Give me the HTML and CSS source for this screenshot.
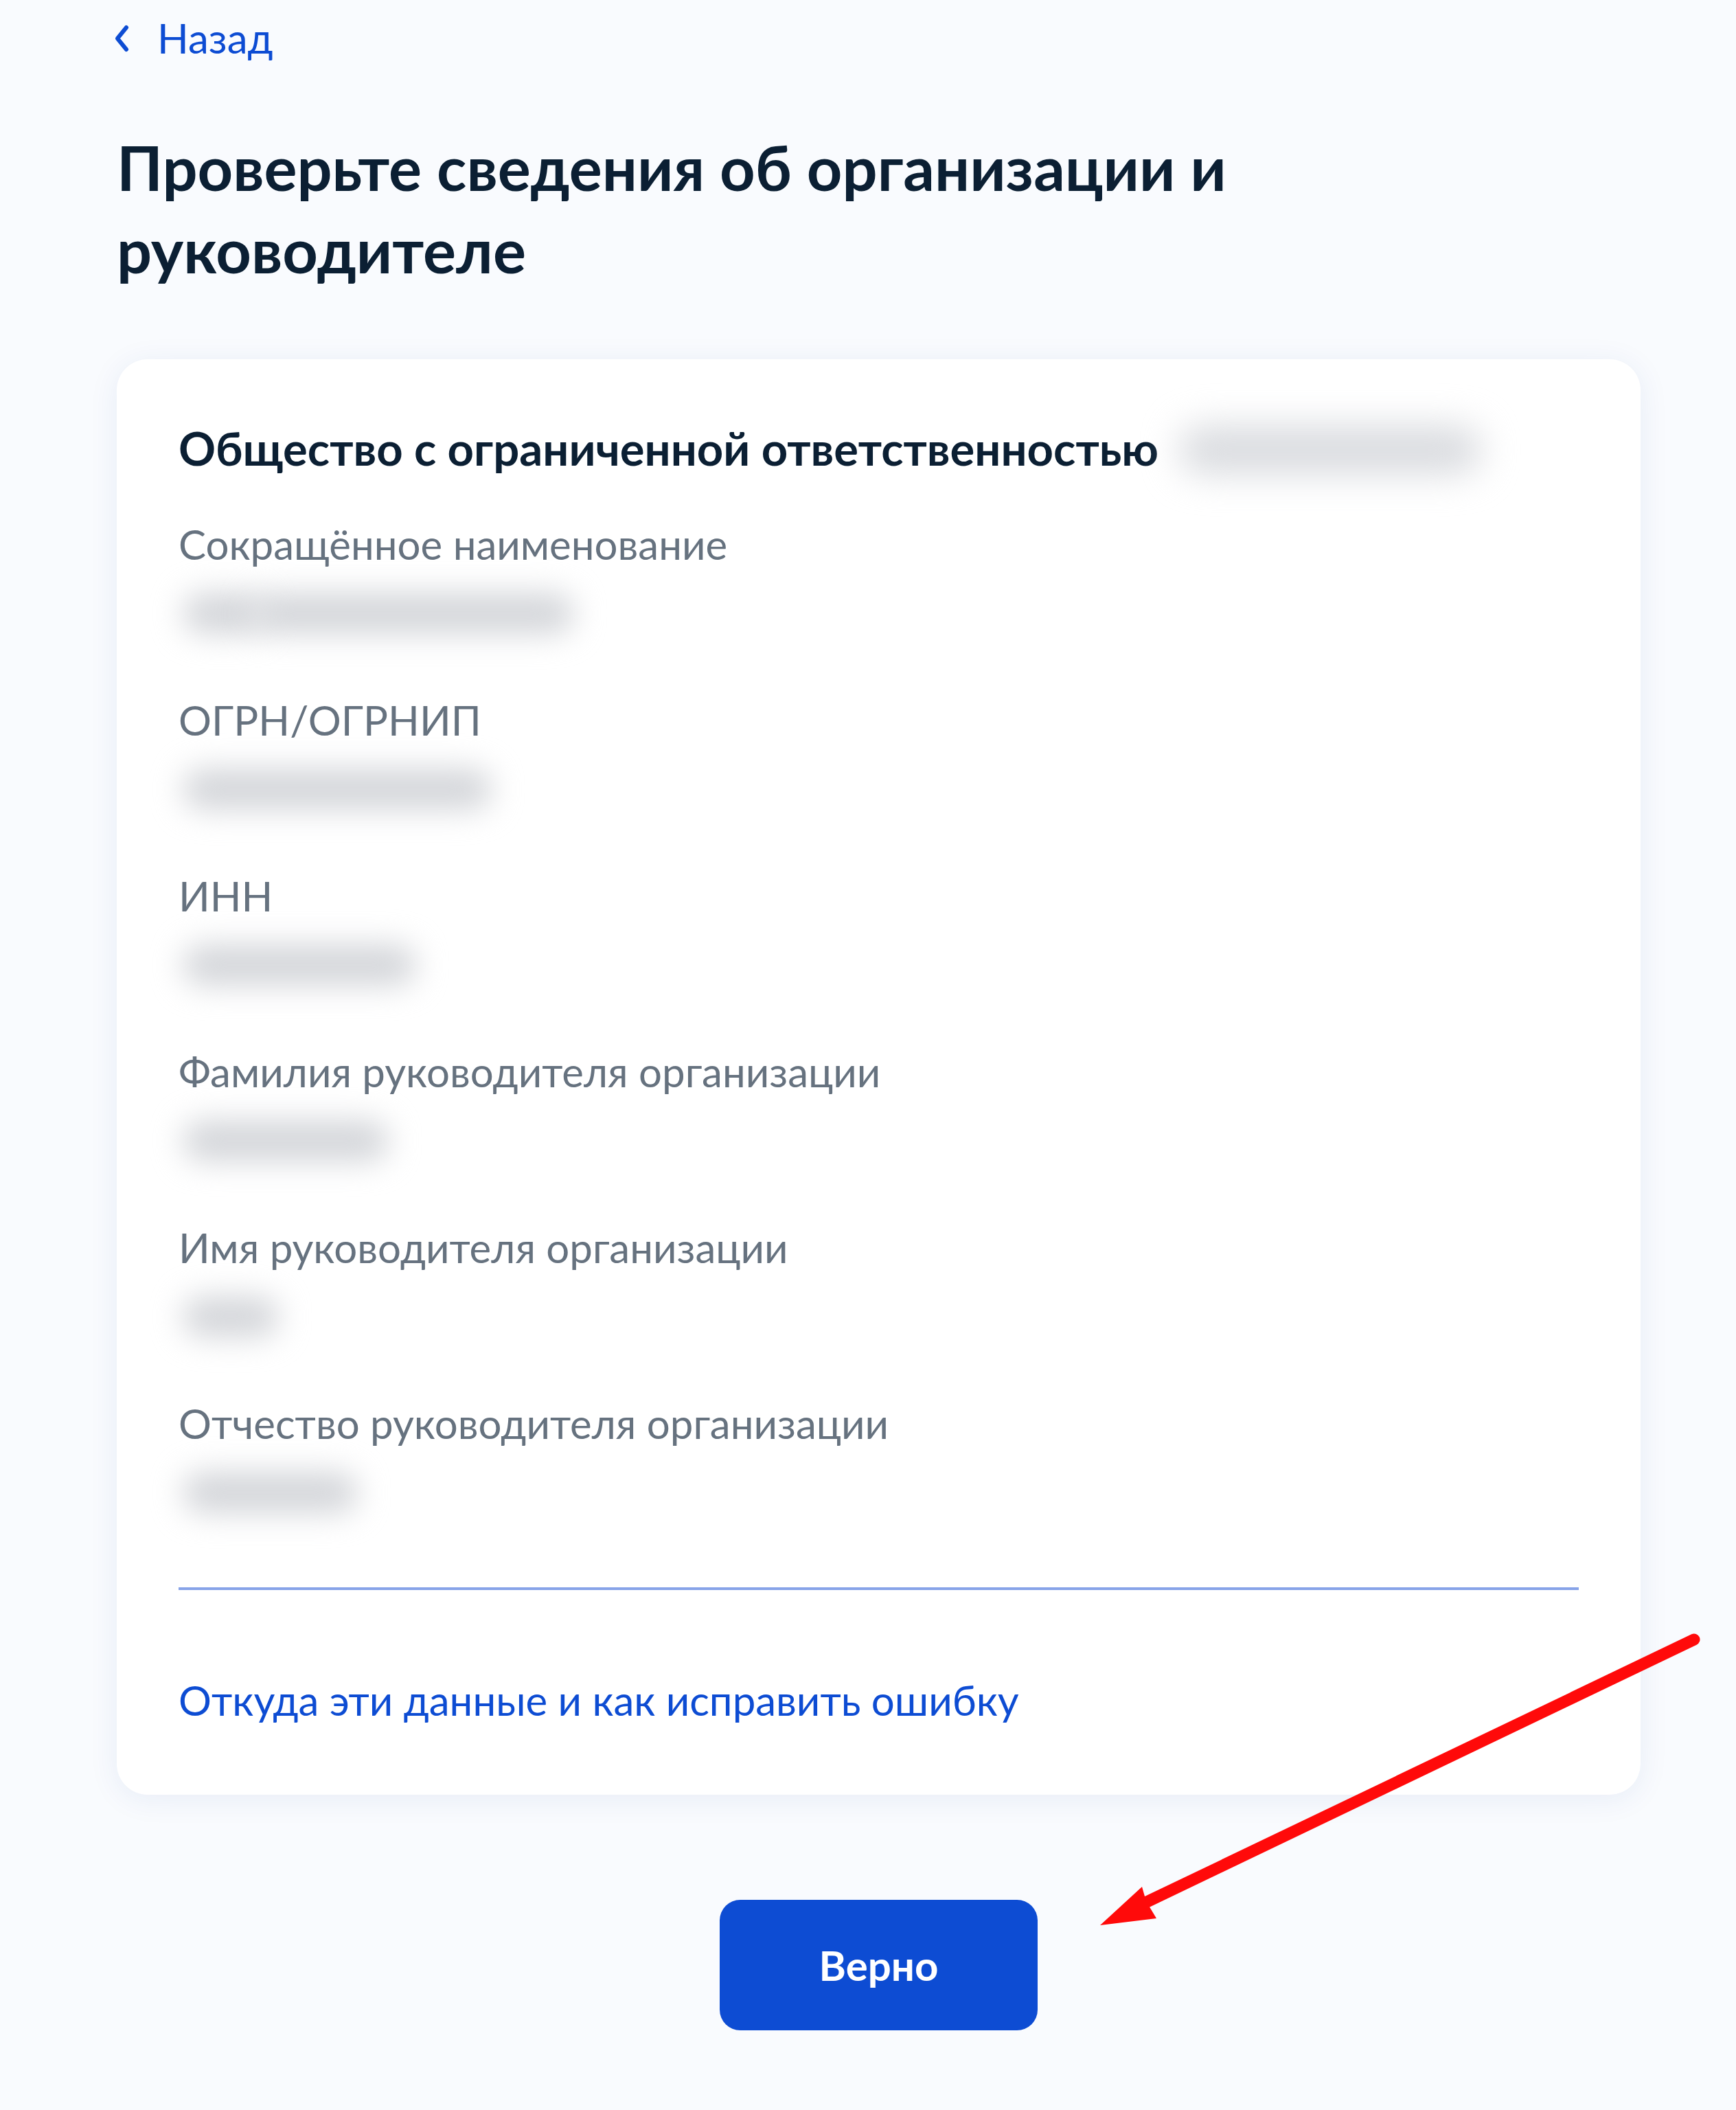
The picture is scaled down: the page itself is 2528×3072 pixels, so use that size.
FILE: index.html
```html
<!DOCTYPE html>
<html lang="ru">
<head>
<meta charset="utf-8">
<title>Проверьте сведения об организации и руководителе</title>
<link rel="stylesheet" href="styles.css">
</head>
<body>
<div class="page">
  <a class="back" href="#">
    <svg class="back-icon" viewBox="0 0 24 42" aria-hidden="true"><path d="M18 5 L5 21 L18 37" fill="none" stroke="currentColor" stroke-width="6" stroke-linecap="round" stroke-linejoin="round"/></svg>
    <span>Назад</span>
  </a>

  <h1 class="title">Проверьте сведения об организации и руководителе</h1>

  <section class="card">
    <h2 class="org">Общество с ограниченной ответственностью<span class="blur blur-org"></span></h2>

    <dl class="fields">
      <div class="field">
        <dt>Сокращённое наименование</dt>
        <dd><span class="blur w-opf"></span><span class="blur w-short"></span></dd>
      </div>
      <div class="field">
        <dt>ОГРН/ОГРНИП</dt>
        <dd><span class="blur w-ogrn"></span></dd>
      </div>
      <div class="field">
        <dt>ИНН</dt>
        <dd><span class="blur w-inn"></span></dd>
      </div>
      <div class="field">
        <dt>Фамилия руководителя организации</dt>
        <dd><span class="blur w-last"></span></dd>
      </div>
      <div class="field">
        <dt>Имя руководителя организации</dt>
        <dd><span class="blur w-first"></span></dd>
      </div>
      <div class="field">
        <dt>Отчество руководителя организации</dt>
        <dd><span class="blur w-middle"></span></dd>
      </div>
    </dl>

    <div class="divider"></div>

    <a class="help" href="#">Откуда эти данные и как исправить ошибку</a>
  </section>

  <div class="actions">
    <button class="btn" type="button">Верно</button>
  </div>

  <svg class="arrow" viewBox="0 0 900 460" aria-hidden="true">
    <line x1="877" y1="17" x2="78" y2="400" stroke="#ff0a0a" stroke-width="17" stroke-linecap="round"/>
    <polygon points="12,433 73,377 79,398 94,423" fill="#ff0a0a"/>
  </svg>
</div>
</body>
</html>
```

FILE: styles.css
```css
html, body {
  margin: 0;
  padding: 0;
}

body {
  background: #f9fbfe;
  font-family: "Lato", "Noto Sans", "Open Sans", sans-serif;
  color: #0b1f33;
  min-height: 3072px;
}

.page {
  position: relative;
  width: 2219px;
  margin: 0 0 0 170px;
  padding-top: 10px;
  padding-bottom: 100px;
}

.back {
  display: flex;
  align-items: center;
  height: 90px;
  font-size: 60px;
  line-height: 90px;
  color: #0d4cd3;
  text-decoration: none;
}

.back-icon {
  width: 24px;
  height: 42px;
  margin-left: -4px;
  margin-right: 39px;
  margin-top: 2px;
}

.title {
  margin: 83px 0 100px;
  max-width: 1760px;
  font-size: 90px;
  line-height: 120px;
  font-weight: 700;
  color: #0b1f33;
}

.card {
  background: #ffffff;
  border-radius: 45px;
  padding: 84px 90px 93px 90px;
  box-shadow: 0 6px 44px rgba(30, 70, 150, 0.08);
}

.org {
  margin: 0;
  display: flex;
  align-items: center;
  font-size: 67px;
  line-height: 90px;
  font-weight: 700;
  color: #0b1f33;
  white-space: nowrap;
}

.blur {
  display: block;
  flex: none;
  height: 60px;
  background: #d4d6da;
  border-radius: 40px;
  filter: blur(22px);
}

.blur-org {
  width: 440px;
  height: 70px;
  margin-left: 30px;
  margin-top: 6px;
  background: #d9dbdf;
  filter: blur(26px);
}

.fields {
  margin: 50px 0 0;
}

.field + .field {
  margin-top: 76px;
}

.field dt {
  font-size: 60px;
  line-height: 90px;
  color: #66727f;
}

.field dd {
  margin: 0;
  height: 90px;
  display: flex;
  align-items: center;
  padding-top: 22px;
  box-sizing: border-box;
}

.w-opf { width: 120px; margin-left: 6px; }
.w-short { width: 470px; margin-left: -20px; }
.w-ogrn { width: 450px; margin-left: 6px; }
.w-inn { width: 340px; margin-left: 6px; }
.w-last { width: 300px; margin-left: 6px; }
.w-first { width: 140px; margin-left: 6px; }
.w-middle { width: 255px; margin-left: 6px; }

.divider {
  margin-top: 104px;
  height: 4px;
  background: #87a3e8;
}

.help {
  display: block;
  margin-top: 115px;
  font-size: 60px;
  line-height: 90px;
  color: #0d4cd3;
  text-decoration: none;
}

.actions {
  display: flex;
  justify-content: center;
  margin-top: 153px;
}

.btn {
  width: 463px;
  height: 190px;
  border: none;
  border-radius: 30px;
  background: #0d4cd3;
  color: #ffffff;
  font-family: "Lato", "Noto Sans", sans-serif;
  font-size: 60px;
  font-weight: 700;
}

.arrow {
  position: absolute;
  left: 1420px;
  top: 2370px;
  width: 900px;
  height: 460px;
}
```
